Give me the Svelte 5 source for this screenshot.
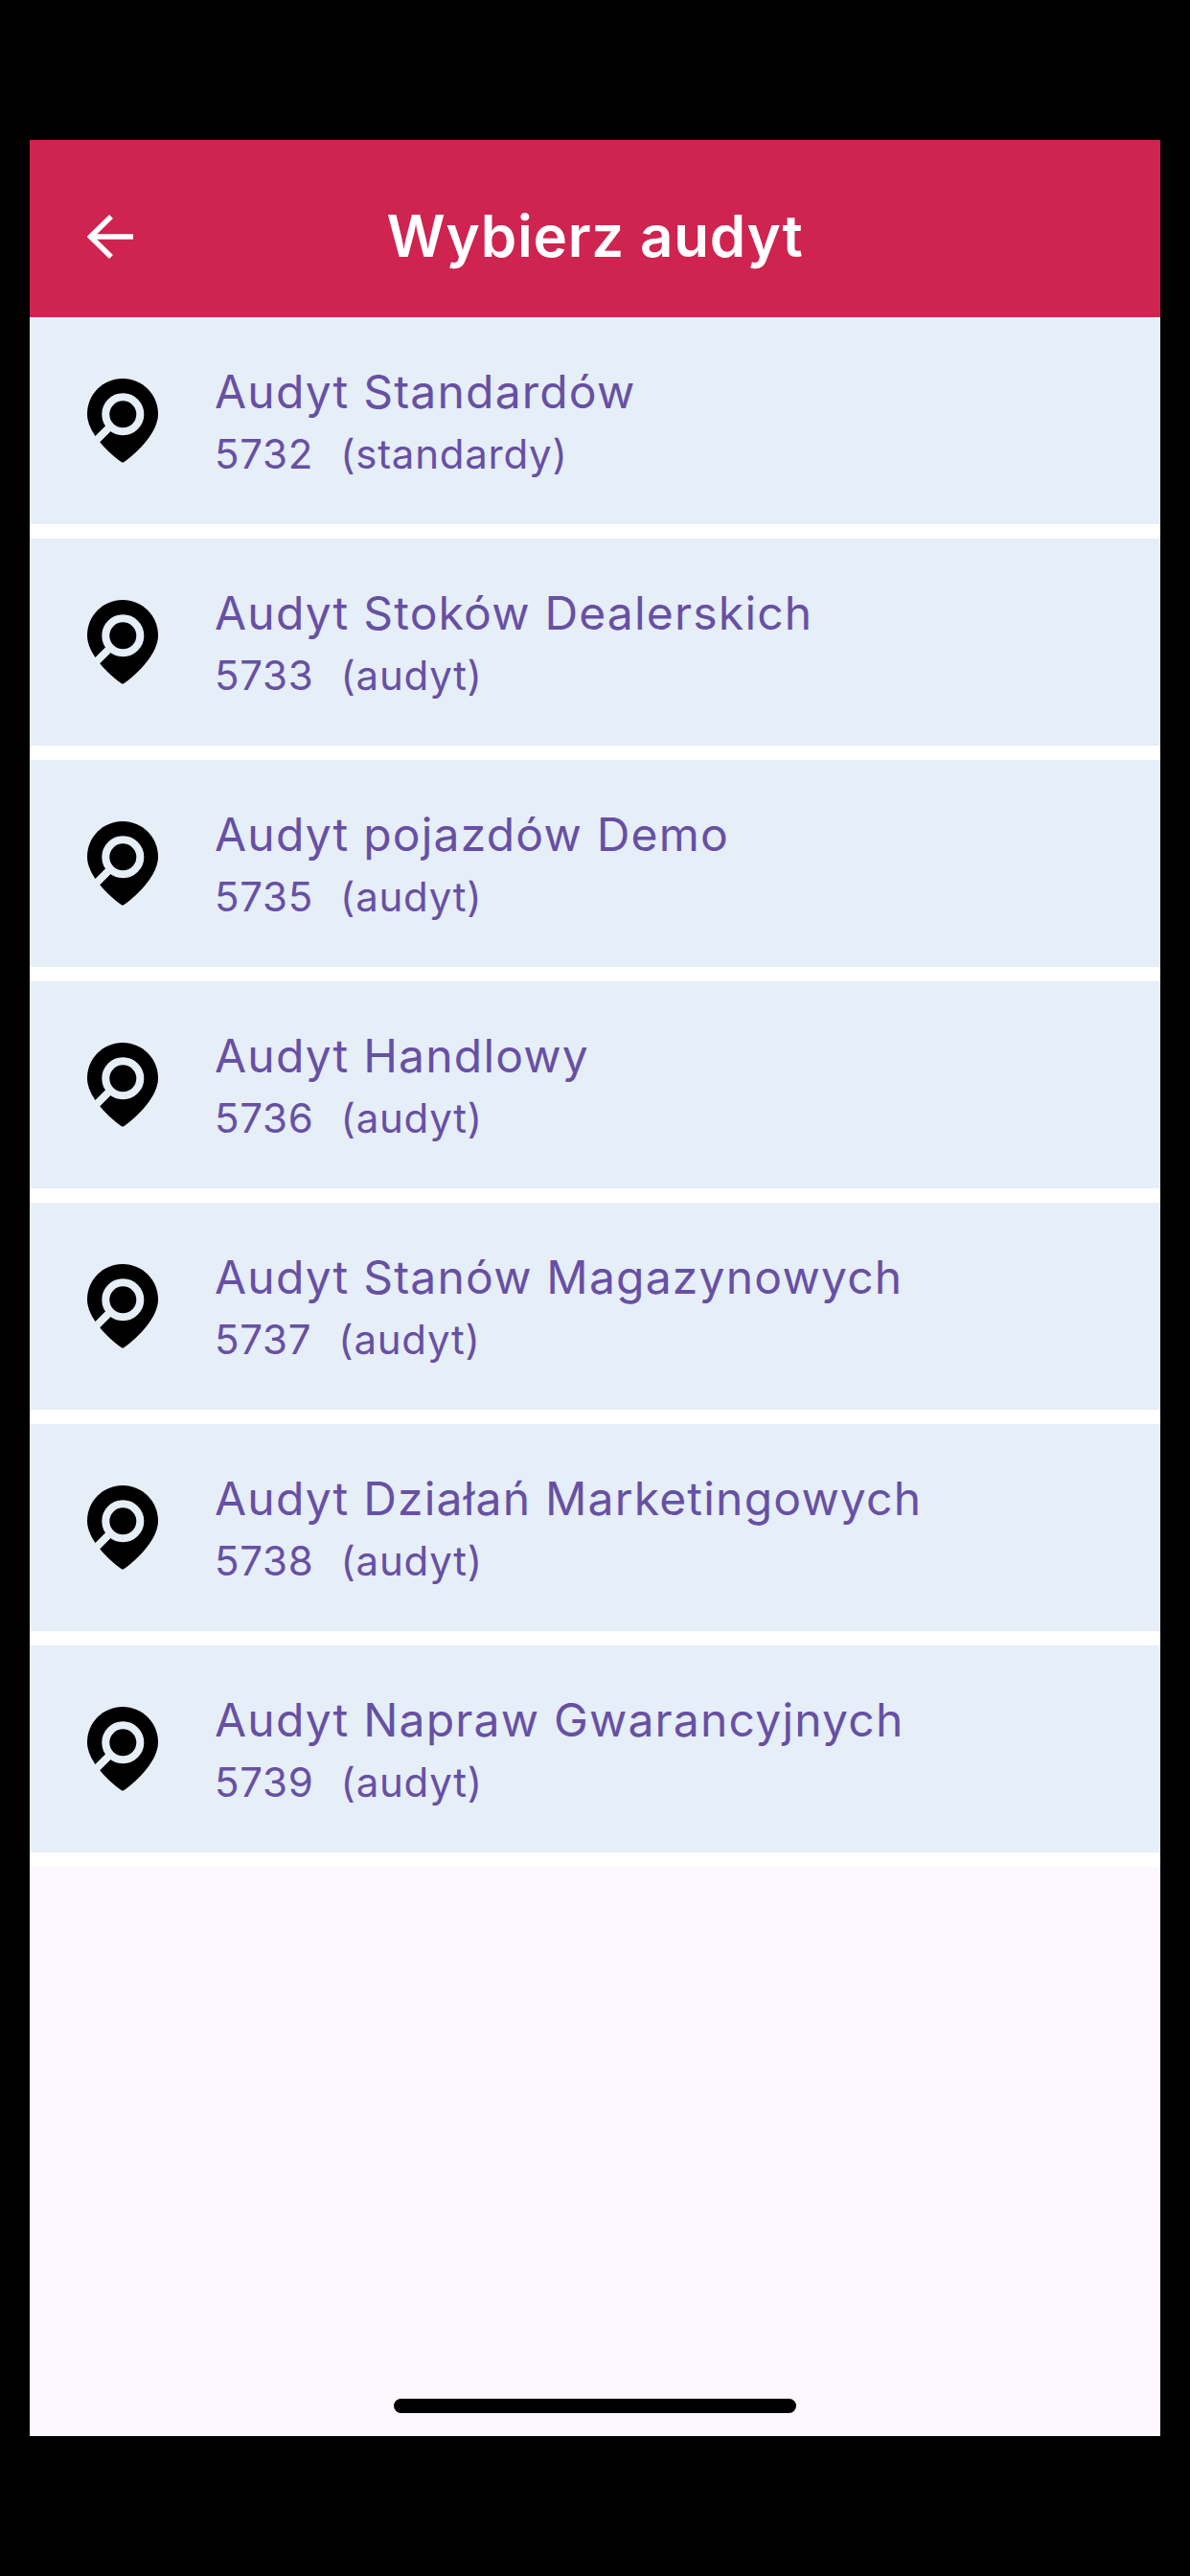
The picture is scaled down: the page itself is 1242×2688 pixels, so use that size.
<script>
  const audits = [
    { name: 'Audyt Standardów', id: 5732, kind: 'standardy' },
    { name: 'Audyt Stoków Dealerskich', id: 5733, kind: 'audyt' },
    { name: 'Audyt pojazdów Demo', id: 5735, kind: 'audyt' },
    { name: 'Audyt Handlowy', id: 5736, kind: 'audyt' },
    { name: 'Audyt Stanów Magazynowych', id: 5737, kind: 'audyt' },
    { name: 'Audyt Działań Marketingowych', id: 5738, kind: 'audyt' },
    { name: 'Audyt Napraw Gwarancyjnych', id: 5739, kind: 'audyt' }
  ]
</script>

<div class="screen">
  <header class="app-bar">
    <button class="back" aria-label="Wstecz">
      <svg width="48" height="46" viewBox="0 0 48 46" fill="none" stroke="#fff" stroke-width="5.5">
        <path d="M48 23H3" />
        <path d="M25 2 3.5 23 25 44" />
      </svg>
    </button>
    <h1>Wybierz audyt</h1>
  </header>

  <ul class="list">
    {#each audits as audit}
      <li class="row">
        <svg class="pin" width="74" height="88" viewBox="0 0 74 88">
          <path d="M37 0C57.5 0 74 16.5 74 37C74 55 55 75 38.5 87Q37 88 35.5 87C19 75 0 55 0 37C0 16.5 16.5 0 37 0Z" fill="#000" />
          <circle cx="37.3" cy="37.3" r="18" fill="#000" stroke="#e6eef8" stroke-width="8" />
          <path d="M24 50 4 70" stroke="#e6eef8" stroke-width="8" />
        </svg>
        <div class="text">
          <div class="name">{audit.name}</div>
          <div class="meta"><span>{audit.id}</span><span>({audit.kind})</span></div>
        </div>
      </li>
    {/each}
  </ul>

  <div class="home-bar"></div>
</div>

<style>
  :global(body) {
    background: #000;
  }

  .screen {
    margin: 146px 31px 0;
    height: 2396px;
    background: #fdf7ff;
    display: flex;
    flex-direction: column;
    font-family: Inter, sans-serif;
  }

  .app-bar {
    height: 185px;
    box-sizing: border-box;
    padding-top: 15px;
    flex: none;
    background: #cf2350;
    position: relative;
    display: flex;
    align-items: center;
    justify-content: center;
  }

  .back {
    position: absolute;
    left: 60px;
    top: 78px;
    padding: 0;
    border: 0;
    background: none;
    display: flex;
  }

  h1 {
    margin: 0;
    color: #fff;
    font-size: 60px;
    font-weight: 600;
    line-height: 1;
    letter-spacing: 0.8px;
  }

  .list {
    list-style: none;
    margin: 0;
    padding: 0;
    background: #fff;
  }

  .row {
    height: 216px;
    margin-bottom: 15px;
    background: #e6eef8;
    display: flex;
    align-items: center;
    padding-left: 60px;
    gap: 59px;
  }

  .pin {
    flex: none;
  }

  .text {
    color: #6750a4;
  }

  .name {
    font-size: 48px;
    line-height: 66px;
    letter-spacing: 1.2px;
    padding-top: 1px;
  }

  .meta {
    font-size: 42px;
    line-height: 60px;
    letter-spacing: 0.75px;
    display: flex;
    gap: 28px;
    padding-top: 2px;
  }

  .home-bar {
    width: 420px;
    height: 15px;
    border-radius: 8px;
    background: #000;
    margin: auto auto 24px;
  }
</style>
